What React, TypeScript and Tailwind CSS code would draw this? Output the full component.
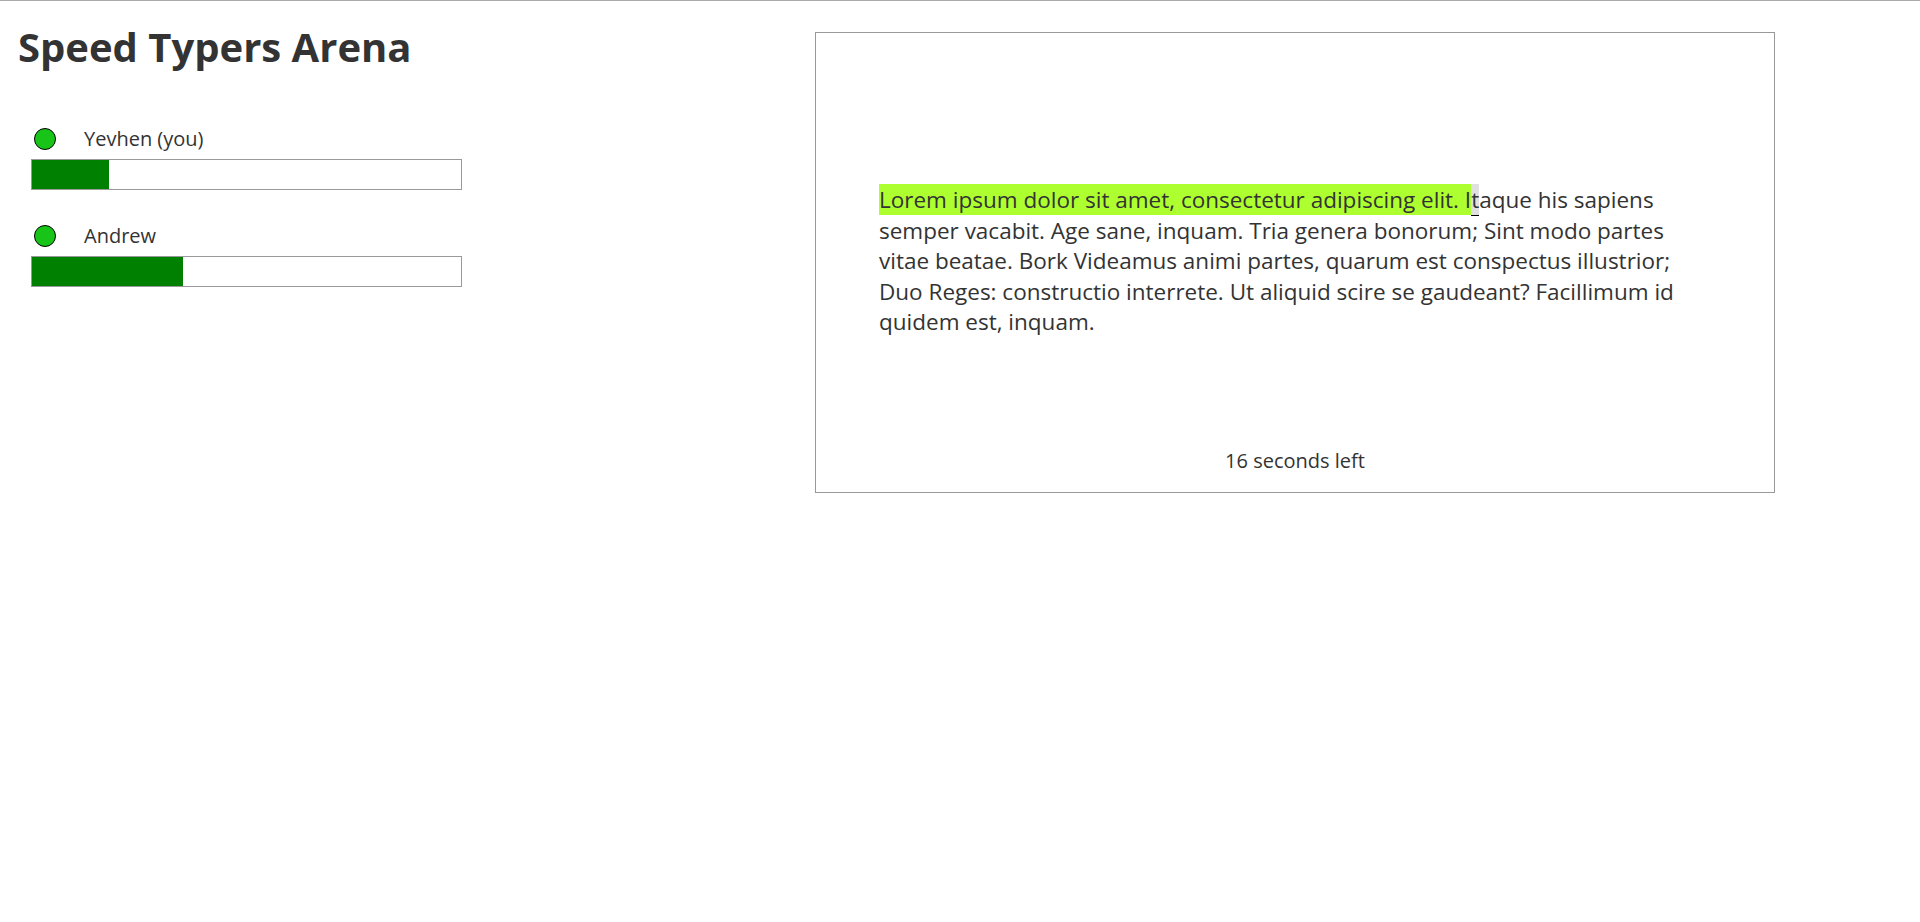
import React from "react";

type Player = {
    name: string;
    progress: number;
};

const players: Player[] = [
    { name: "Yevhen (you)", progress: 18 },
    { name: "Andrew", progress: 35.2 },
];

const typed = "Lorem ipsum dolor sit amet, consectetur adipiscing elit. I";
const current = "t";
const rest =
    "aque his sapiens semper vacabit. Age sane, inquam. Tria genera bonorum; Sint modo partes vitae beatae. Bork Videamus animi partes, quarum est conspectus illustrior; Duo Reges: constructio interrete. Ut aliquid scire se gaudeant? Facillimum id quidem est, inquam.";

const PlayerRow = ({ player }: { player: Player }) => {
    return (
        <div className="flex flex-col">
            <div className="flex items-center h-[27px]">
                <div className="ml-[3px] w-[22px] h-[22px] rounded-full bg-[#18c418] border-[1.5px] border-black" />
                <span className="ml-[28px] text-[20px] leading-[27px] text-[#333]">
                    {player.name}
                </span>
            </div>
            <div className="mt-[7px] w-[431px] h-[31px] border border-[#999] bg-white">
                <div
                    className="h-full bg-[#008000]"
                    style={{ width: `${player.progress}%` }}
                />
            </div>
        </div>
    );
};

const App = () => {
    return (
        <div className="w-screen min-h-screen bg-white border-t border-[#aaa] font-['Open_Sans',sans-serif] text-[#333]">
            <div className="flex">
                <div className="w-[815px] shrink-0 pl-[18px]">
                    <h1 className="mt-[19px] text-[40px] leading-[54px] font-bold text-[#333]">
                        Speed Typers Arena
                    </h1>
                    <div className="ml-[13px] mt-[51px] flex flex-col gap-[32px]">
                        {players.map((player) => (
                            <PlayerRow key={player.name} player={player} />
                        ))}
                    </div>
                </div>

                <div className="mt-[31px] w-[960px] h-[461px] shrink-0 border border-[#999] flex flex-col">
                    <div className="pt-[152px] px-[63px] text-[22.5px] leading-[30.6px]">
                        <span className="bg-[#adff2f]">{typed}</span>
                        <span className="bg-[#e0e0e0] border-b border-black">
                            {current}
                        </span>
                        {rest}
                    </div>
                    <div className="mt-auto pb-[18px] text-center text-[20px] leading-[27px]">
                        16 seconds left
                    </div>
                </div>
            </div>
        </div>
    );
};

export default App;
